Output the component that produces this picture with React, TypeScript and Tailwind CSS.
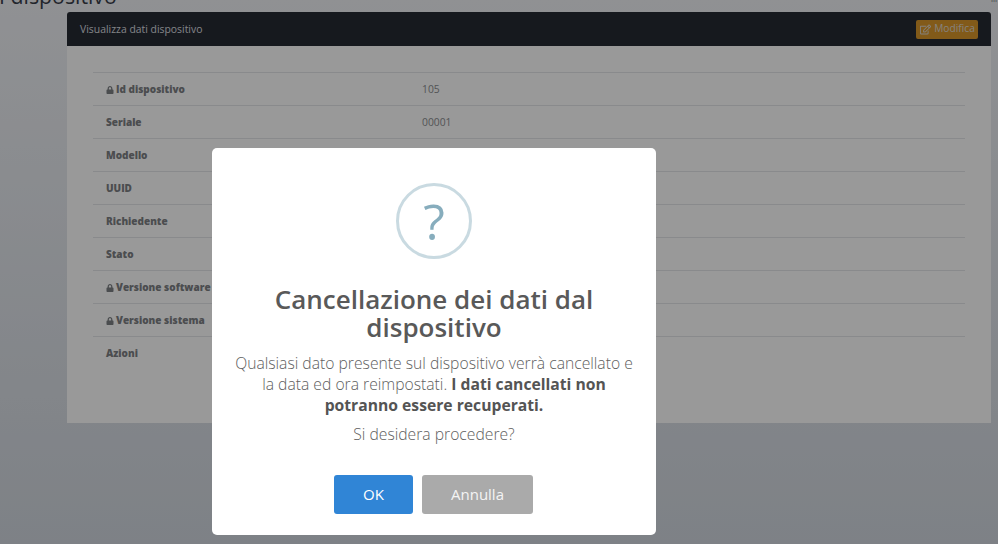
import React from 'react';
import { FaLock, FaRegEdit } from 'react-icons/fa';

const rows = [
    { label: 'Id dispositivo', value: '105', locked: true },
    { label: 'Seriale', value: '00001' },
    { label: 'Modello' },
    { label: 'UUID' },
    { label: 'Richiedente' },
    { label: 'Stato' },
    { label: 'Versione software', locked: true },
    { label: 'Versione sistema', locked: true },
    { label: 'Azioni' },
];

export default function App() {
    return (
        <div className="relative h-[544px] w-[998px] overflow-hidden bg-linear-to-b from-[#f0f2f6] to-[#d2d8e0] font-['Open_Sans',sans-serif]">
            <div className="flex h-[12px] items-start justify-between overflow-hidden">
                <h1 className="-mt-[18px] -ml-[1px] text-[21.3px] leading-[28px] font-normal whitespace-nowrap text-[#3a3f4a]">I dispositivo</h1>
                <span className="-mt-[5px] mr-[1px] text-[8px] leading-[8px] text-[#777]">ııı</span>
            </div>

            <div className="ml-[67px] h-[411px] w-[924px] rounded-t-[3px] bg-white">
                <div className="flex h-[34px] items-center justify-between rounded-t-[3px] bg-[#262b33] pr-[13px] pl-[13px]">
                    <span className="pt-[1px] text-[10.4px] text-[#dcdee0]">Visualizza dati dispositivo</span>
                    <button className="flex h-[19px] w-[62px] items-center justify-center gap-[3px] rounded-[2px] bg-[#d9962a] pl-[1px] text-[10.2px] text-[#dedad2]">
                        <FaRegEdit className="h-[11px] w-[11px]" />
                        Modifica
                    </button>
                </div>
                <div className="px-[26px] pt-[26px]">
                    {rows.map(row => (
                        <div key={row.label} className="flex h-[33px] items-center border-t border-[#e4e6e9] pt-[1px] text-[10px]">
                            <div className="flex w-[329px] items-center gap-[2px] pl-[13px] font-extrabold text-[#7d8084]">
                                {row.locked && <FaLock className="h-[8px] w-[8px]" />}
                                {row.label}
                            </div>
                            <div className="text-[10.3px] text-[#8a8d90]">{row.value}</div>
                        </div>
                    ))}
                </div>
            </div>

            <div className="absolute inset-0 bg-black/40">
                <div className="mt-[148px] ml-[212px] h-[387px] w-[444px] rounded-[5px] bg-white pt-[35px] text-center">
                    <div className="mx-auto flex h-[76px] w-[76px] items-center justify-center rounded-full border-[3px] border-[#c9dae1] text-[50px] leading-none font-normal text-[#87adbd]">
                        ?
                    </div>
                    <h2 className="mx-auto mt-[26px] w-[400px] text-[26px] leading-[28px] font-semibold text-[#595959]">
                        Cancellazione dei dati dal dispositivo
                    </h2>
                    <p className="mx-auto mt-[12px] w-[400px] text-[15.7px] leading-[21px] font-light text-[#606060]">
                        Qualsiasi dato presente sul dispositivo verrà cancellato e la data ed ora reimpostati.{' '}
                        <strong className="font-bold text-[#545454]">I dati cancellati non potranno essere recuperati.</strong>
                    </p>
                    <p className="mt-[8px] text-[15.7px] leading-[21px] font-light text-[#606060]">Si desidera procedere?</p>
                    <div className="mt-[30px] flex justify-center gap-[9px] pr-[1px]">
                        <button className="h-[39px] w-[79px] rounded-[3px] bg-[#3085d6] text-[15px] text-white">OK</button>
                        <button className="h-[39px] w-[111px] rounded-[3px] bg-[#aaaaaa] text-[15px] text-[#f4f4f4]">Annulla</button>
                    </div>
                </div>
            </div>
        </div>
    );
}
